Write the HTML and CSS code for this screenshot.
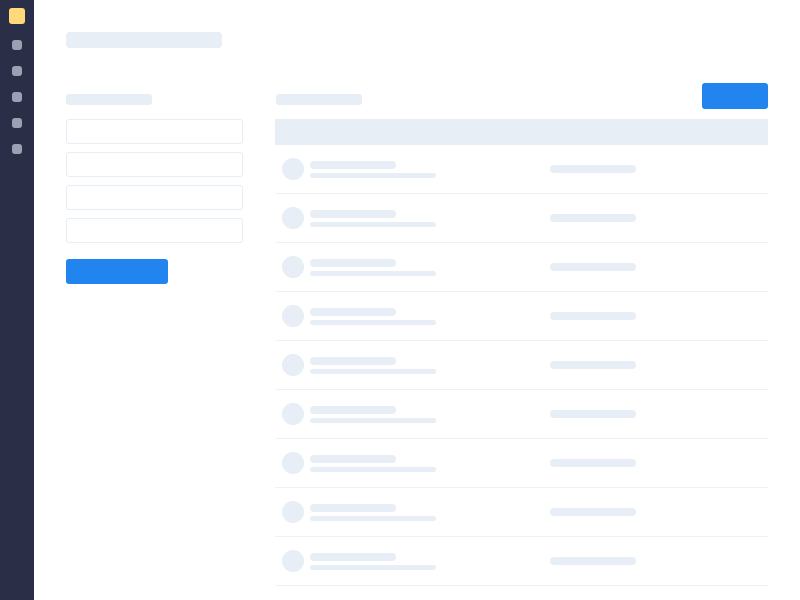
FILE: index.html
```html
<!DOCTYPE html>
<html lang="en">
<head>
    <meta charset="UTF-8">
    <meta name="viewport" content="width=device-width, initial-scale=1.0">
    <title>Dashboard</title>
    <link rel="stylesheet" href="styles.css">
</head>
<body>
    <div class="app">
        <nav class="sidebar">
            <div class="logo"></div>
            <div class="nav-dot"></div>
            <div class="nav-dot"></div>
            <div class="nav-dot"></div>
            <div class="nav-dot"></div>
            <div class="nav-dot"></div>
        </nav>

        <main class="content">
            <div class="page-title"></div>

            <div class="columns">
                <!-- Form column -->
                <section class="form-col">
                    <div class="section-label"></div>
                    <div class="field"></div>
                    <div class="field"></div>
                    <div class="field"></div>
                    <div class="field"></div>
                    <div class="submit-btn"></div>
                </section>

                <!-- List column -->
                <section class="list-col">
                    <div class="list-head">
                        <div class="section-label"></div>
                        <div class="add-btn"></div>
                    </div>
                    <div class="table">
                        <div class="table-header"></div>
                        <div id="rows"></div>
                    </div>
                </section>
            </div>
        </main>
    </div>

    <script>
        const rowsEl = document.getElementById("rows");

        // Build placeholder rows
        for (let i = 0; i < 9; i++) {
            const row = document.createElement("div");
            row.className = "row";
            row.innerHTML =
                '<div class="cell-main">' +
                    '<div class="avatar"></div>' +
                    '<div class="lines"><div class="line-a"></div><div class="line-b"></div></div>' +
                '</div>' +
                '<div class="cell-side"><div class="pill"></div></div>';
            rowsEl.appendChild(row);
        }
    </script>
</body>
</html>
```

FILE: styles.css
```css
/* Skeleton dashboard */
body {
    margin: 0;
    background-color: #fff;
    font-family: "Liberation Sans", Arial, sans-serif;
}

.app {
    display: flex;
    height: 600px;
    overflow: hidden;
}

.sidebar {
    width: 34px;
    flex-shrink: 0;
    background-color: #2a2f47;
    display: flex;
    flex-direction: column;
    align-items: center;
    padding-top: 8px;
    box-sizing: border-box;
}

.logo {
    width: 16px;
    height: 16px;
    border-radius: 3px;
    background-color: #ffd97a;
    margin-bottom: 16px;
}

.nav-dot {
    width: 10px;
    height: 10px;
    border-radius: 3px;
    background-color: #9ba0b2;
    margin-bottom: 16px;
}

.content {
    flex: 1;
    padding: 32px;
}

.page-title {
    width: 156px;
    height: 16px;
    border-radius: 4px;
    background-color: #e7eef6;
    margin-bottom: 35px;
}

.columns {
    display: flex;
    gap: 32px;
}

.form-col {
    width: 177px;
    flex-shrink: 0;
}

.section-label {
    width: 86px;
    height: 11px;
    border-radius: 3px;
    background-color: #e7eef6;
    margin-top: 11px;
}

.form-col .section-label {
    margin-bottom: 14px;
}

.field {
    height: 25px;
    border: 1px solid #e6edf5;
    border-radius: 3px;
    box-sizing: border-box;
    margin-bottom: 8px;
}

.submit-btn {
    width: 102px;
    height: 25px;
    border-radius: 3px;
    background-color: #2284ef;
    margin-top: 16px;
}

.list-col {
    flex: 1;
}

.list-head {
    display: flex;
    justify-content: space-between;
    align-items: flex-start;
    margin-bottom: 10px;
}

.list-head .section-label {
    margin-left: 1px;
}

.add-btn {
    width: 66px;
    height: 26px;
    border-radius: 3px;
    background-color: #2284ef;
}

.table-header {
    height: 26px;
    background-color: #e7eef6;
}

.row {
    display: grid;
    grid-template-columns: 268px 1fr;
    align-items: center;
    height: 49px;
    box-sizing: border-box;
    padding: 0 7px;
    border-bottom: 1px solid #eef2f7;
}

.cell-main {
    display: flex;
    align-items: center;
    gap: 6px;
}

.avatar {
    width: 22px;
    height: 22px;
    border-radius: 50%;
    background-color: #e7eef6;
}

.lines {
    display: flex;
    flex-direction: column;
    gap: 4px;
    padding-top: 1px;
}

.line-a {
    width: 86px;
    height: 8px;
    border-radius: 4px;
    background-color: #e7eef6;
}

.line-b {
    width: 126px;
    height: 5px;
    border-radius: 3px;
    background-color: #e7eef6;
}

.pill {
    width: 86px;
    height: 8px;
    border-radius: 4px;
    background-color: #e7eef6;
}
```
